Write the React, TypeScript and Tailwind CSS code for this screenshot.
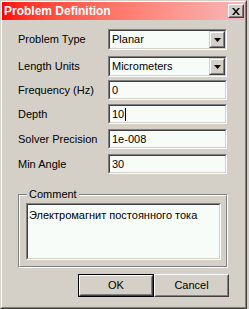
import React from "react";

const font = "font-['Liberation_Sans',Arial,sans-serif]";

const Sunken = ({ children, className = "" }: { children: React.ReactNode; className?: string }) => (
  <div className={`border border-t-[#808080] border-l-[#808080] border-b-white border-r-white ${className}`}>
    <div className="h-full w-full border border-t-[#404040] border-l-[#404040] border-b-[#d4d0c8] border-r-[#d4d0c8] bg-[#f8fcf8]">
      {children}
    </div>
  </div>
);

const Combo = ({ value }: { value: string }) => (
  <Sunken className="w-[119px] h-[21px]">
    <div className="flex h-full items-center justify-between">
      <span className="pl-[2px] text-[11px] text-black">{value}</span>
      <div className="h-[17px] w-[16px] border border-t-[#d4d0c8] border-l-[#d4d0c8] border-b-[#404040] border-r-[#404040]">
        <div className="flex h-full w-full items-center justify-center border border-t-white border-l-white border-b-[#808080] border-r-[#808080] bg-[#d4d0c8]">
          <svg width="7" height="4" viewBox="0 0 7 4">
            <path d="M0 0h7L3.5 4z" fill="#000" />
          </svg>
        </div>
      </div>
    </div>
  </Sunken>
);

const Edit = ({ value, caret = false }: { value: string; caret?: boolean }) => (
  <Sunken className="w-[119px] h-[20px]">
    <div className="flex h-full items-center pl-[2px] text-[11px] text-black">
      <span>{value}</span>
      {caret && <span className="ml-[1px] inline-block h-[13px] w-[1px] bg-black" />}
    </div>
  </Sunken>
);

const Row = ({ label, children, className = "" }: { label: string; children: React.ReactNode; className?: string }) => (
  <div className={`flex items-center ${className}`}>
    <span className="w-[90px] text-[11px] text-black">{label}</span>
    {children}
  </div>
);

export default function App() {
  return (
    <div className={`h-[309px] w-[249px] bg-[#d4d0c8] ${font}`}>
      <div className="h-[309px] w-[247px] border border-t-[#d4d0c8] border-l-[#d4d0c8] border-b-[#404040] border-r-[#404040]">
        <div className="flex h-full w-full flex-col border border-t-white border-l-white border-b-[#808080] border-r-[#808080] bg-[#d4d0c8]">
          {/* caption */}
          <div className="flex h-[18px] items-center justify-between bg-linear-to-r from-[#ff0000] to-[#f6b8b8] pl-[2px] pr-[1px]">
            <span className="text-[12px] font-bold text-white">Problem Definition</span>
            <div className="h-[14px] w-[16px] border border-t-white border-l-white border-b-[#404040] border-r-[#404040]">
              <div className="flex h-full w-full items-center justify-center border border-t-[#d4d0c8] border-l-[#d4d0c8] border-b-[#808080] border-r-[#808080] bg-[#d4d0c8]">
                <svg width="8" height="7" viewBox="0 0 8 7">
                  <path d="M0 0h2l2 2.5L6 0h2L5 3.5 8 7H6L4 4.5 2 7H0l3-3.5z" fill="#000" />
                </svg>
              </div>
            </div>
          </div>

          <div className="flex flex-col pl-[16px]">
            <Row label="Problem Type" className="mt-[9px]">
              <Combo value="Planar" />
            </Row>
            <Row label="Length Units" className="mt-[6px]">
              <Combo value="Micrometers" />
            </Row>
            <Row label="Frequency (Hz)" className="mt-[3px]">
              <Edit value="0" />
            </Row>
            <Row label="Depth" className="mt-[4px]">
              <Edit value="10" caret />
            </Row>
            <Row label="Solver Precision" className="mt-[5px]">
              <Edit value="1e-008" />
            </Row>
            <Row label="Min Angle" className="mt-[5px]">
              <Edit value="30" />
            </Row>

            {/* comment group */}
            <div className="relative mt-[20px] w-[210px] border border-t-[#808080] border-l-[#808080] border-b-white border-r-white">
              <div className="border border-t-white border-l-white border-b-[#808080] border-r-[#808080] px-[6px] pt-[7px] pb-[6px]">
                <Sunken className="h-[57px] w-[195px]">
                  <div className="px-[1px] pt-[2px] text-[11px] text-black">Электромагнит постоянного тока</div>
                </Sunken>
              </div>
              <span className="absolute -top-[7px] left-[8px] bg-[#d4d0c8] px-[2px] text-[11px] leading-[13px] text-black">
                Comment
              </span>
            </div>

            <div className="mt-[6px] flex w-[211px] justify-end">
              <div className="h-[23px] w-[76px] border border-black">
                <div className="h-full w-full border border-t-white border-l-white border-b-[#404040] border-r-[#404040]">
                  <div className="flex h-full w-full items-center justify-center border border-t-[#d4d0c8] border-l-[#d4d0c8] border-b-[#808080] border-r-[#808080] bg-[#d4d0c8] text-[11px] text-black">
                    OK
                  </div>
                </div>
              </div>
              <div className="h-[23px] w-[75px] border border-t-white border-l-white border-b-[#404040] border-r-[#404040]">
                <div className="flex h-full w-full items-center justify-center border border-t-[#d4d0c8] border-l-[#d4d0c8] border-b-[#808080] border-r-[#808080] bg-[#d4d0c8] text-[11px] text-black">
                  Cancel
                </div>
              </div>
            </div>
          </div>
        </div>
      </div>
    </div>
  );
}
